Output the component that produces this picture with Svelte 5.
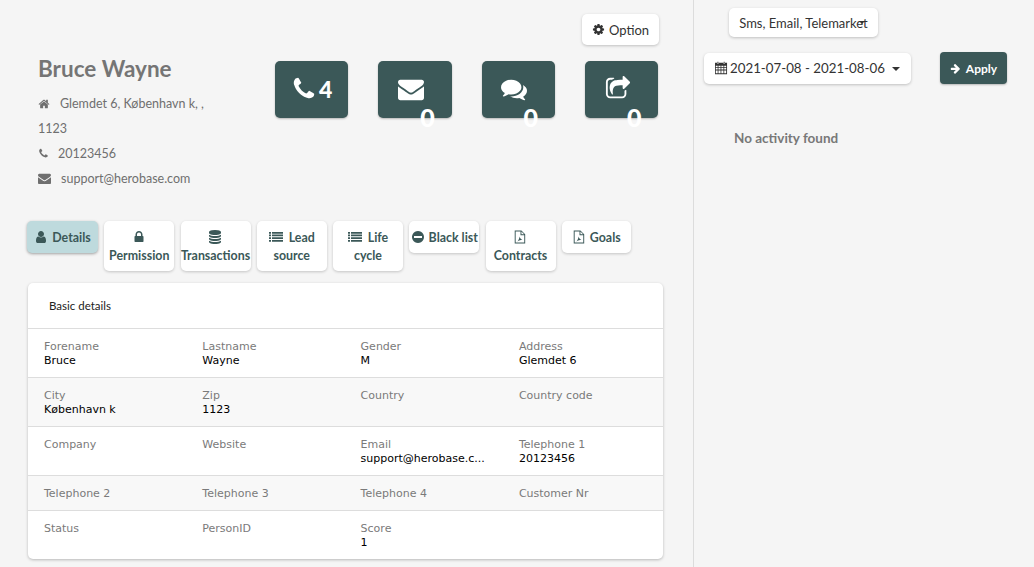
<script>
  const paths = {
    phone: "M1600 1240q0 27-10 70.5t-21 68.5q-21 50-122 106-94 51-186 51-27 0-53-3.5t-57.5-12.5-47-14.5-55.5-20.5-49-18q-98-35-175-83-127-79-264-216t-216-264q-48-77-83-175-3-9-18-49t-20.5-55.5-14.5-47-12.5-57.5-3.5-53q0-92 51-186 56-101 106-122 25-11 68.5-21t70.5-10q14 0 21 3 18 6 53 76 11 19 30 54t35 63.5 31 53.5q3 4 17.5 25t21.5 35.5 7 28.5q0 20-28.5 50t-62 55-62 53-28.5 46q0 9 5 22.5t8.5 20.5 14 24 11.5 19q76 137 174 235t235 174q2 1 19 11.5t24 14 20.5 8.5 22.5 5q18 0 46-28.5t53-62 55-62 50-28.5q14 0 28.5 7t35.5 21.5 25 17.5q25 15 53.5 31t63.5 35 54 30q70 35 76 53 3 7 3 21z",
    envelope: "M1792 710v794q0 66-47 113t-113 47h-1472q-66 0-113-47t-47-113v-794q44 49 101 87 362 246 497 345 57 42 92.5 65.5t94.5 48 110 24.5h2q51 0 110-24.5t94.5-48 92.5-65.5q170-123 498-345 57-39 100-87zm0-294q0 79-49 151t-122 123q-376 261-468 325-10 7-42.5 30.5t-54 38-52 32.5-57.5 27-50 9h-2q-23 0-50-9t-57.5-27-52-32.5-54-38-42.5-30.5q-91-64-262-182.5t-205-142.5q-62-42-117-115.5t-55-136.5q0-78 41.5-130t118.5-52h1472q65 0 112.5 47t47.5 113z",
    comments: "M1408 768q0 139-94 257t-256.5 186.5-353.5 68.5q-86 0-176-16-124 88-278 128-36 9-86 16h-3q-11 0-20.5-8t-11.5-21q-1-3-1-6.5t.5-6.5 2-6l2.5-5 3.5-5.5 4-5 4.5-5 4-4.5q5-6 23-25t26-29.5 22.5-29 25-38.5 20.5-44q-124-72-195-177t-71-224q0-139 94-257t256.5-186.5 353.5-68.5 353.5 68.5 256.5 186.5 94 257zm384 256q0 120-71 224.5t-195 176.5q10 24 20.5 44t25 38.5 22.5 29 26 29.5 23 25q1 1 4 4.5t4.5 5 4 5 3.5 5.5l2.5 5 2 6 .5 6.5-1 6.5q-3 14-13 22t-22 7q-50-7-86-16-154-40-278-128-90 16-176 16-271 0-472-132 58 4 88 4 161 0 309-45t264-129q125-92 192-212t67-254q0-77-23-152 129 71 204 178t75 230z",
    share: "M1472 989v259q0 119-84.500 203.500t-203.500 84.500h-832q-119 0-203.500-84.500t-84.500-203.500v-832q0-119 84.500-203.500t203.500-84.500h255q13 0 22.500 9.500t9.500 22.500q0 27-26 32-77 26-133 60-10 4-16 4h-112q-66 0-113 47t-47 113v832q0 66 47 113t113 47h832q66 0 113-47t47-113v-214q0-19 18-29 28-13 54-37 16-16 35-8 21 9 21 29zM1709 494l-384 384q-18 19-45 19-12 0-25-5-39-17-39-59v-192h-160q-323 0-438 131-119 137-74 473 3 23-20 34-8 2-12 2-16 0-26-13-10-14-21-31t-39.500-68.500-49.500-99.500-38.500-114-17.500-122q0-49 3.500-91t14-90 28-88 47-81.500 68.500-74 94.500-61.500 124.500-48.500 159.500-30.500 196.500-11h160v-192q0-42 39-59 13-5 25-5 26 0 45 19l384 384q19 19 19 45t-19 45z",
    home: "M1472 992v480q0 26-19 45t-45 19h-384v-384h-256v384h-384q-26 0-45-19t-19-45v-480q0-1 .5-3t.5-3l575-474 575 474q1 2 1 6zm223-69l-62 74q-8 9-21 11h-3q-13 0-21-7l-692-577-692 577q-12 8-24 7-13-2-21-11l-62-74q-8-10-7-23.500t11-21.500l719-599q32-26 76-26t76 26l244 204v-195q0-14 9-23t23-9h192q14 0 23 9t9 23v408l219 182q10 8 11 21.500t-7 23.500z",
    gear: "M1152 896q0-106-75-181t-181-75-181 75-75 181 75 181 181 75 181-75 75-181zm512-109v222q0 12-8 23t-20 13l-185 28q-19 54-39 91 35 50 107 138 10 12 10 25t-9 23q-27 37-99 108t-94 71q-12 0-26-9l-138-108q-44 23-91 38-16 136-29 186-7 28-36 28h-222q-14 0-24.500-8.500t-11.500-21.500l-28-184q-49-16-90-37l-141 107q-10 9-25 9-14 0-25-11-126-114-165-168-7-10-7-23 0-12 8-23 15-21 51-66.500t54-70.500q-27-50-41-99l-183-27q-13-2-21-12.500t-8-23.500v-222q0-12 8-23t19-13l186-28q14-46 39-92-40-57-107-138-10-12-10-24 0-10 9-23 26-36 98.500-107.500t94.500-71.500q13 0 26 10l138 107q44-23 91-38 16-136 29-186 7-28 36-28h222q14 0 24.500 8.500t11.500 21.500l28 184q49 16 90 37l142-107q9-9 24-9 13 0 25 10 129 119 165 170 7 8 7 22 0 12-8 23-15 21-51 66.500t-54 70.500q26 50 41 98l183 28q13 2 21 12.500t8 23.500z",
    user: "M1536 1399q0 109-62.500 187t-150.500 78h-854q-88 0-150.500-78t-62.500-187q0-85 8.500-160.500t31.500-152 58.500-131 94-89 134.500-34.500q131 128 313 128t313-128q76 0 134.500 34.500t94 89 58.500 131 31.500 152 8.500 160.500zm-256-887q0 159-112.500 271.500t-271.500 112.500-271.500-112.500-112.500-271.500 112.500-271.500 271.500-112.500 271.500 112.500 112.500 271.500z",
    lock: "M640 768h512v-192q0-106-75-181t-181-75-181 75-75 181v192zm832 96v576q0 40-28 68t-68 28h-960q-40 0-68-28t-28-68v-576q0-40 28-68t68-28h32v-192q0-184 132-316t316-132 316 132 132 316v192h32q40 0 68 28t28 68z",
    database: "M896 768q237 0 443-43t325-127v170q0 69-103 128t-280 93.500-385 34.500-385-34.500-280-93.500-103-128v-170q119 84 325 127t443 43zm0 768q237 0 443-43t325-127v170q0 69-103 128t-280 93.500-385 34.500-385-34.500-280-93.500-103-128v-170q119 84 325 127t443 43zm0-384q237 0 443-43t325-127v170q0 69-103 128t-280 93.500-385 34.500-385-34.500-280-93.500-103-128v-170q119 84 325 127t443 43zm0-1152q208 0 385 34.500t280 93.500 103 128v128q0 69-103 128t-280 93.500-385 34.500-385-34.500-280-93.500-103-128v-128q0-69 103-128t280-93.500 385-34.500z",
    list: "M0 250h256v224h-256zM384 250h1408v224h-1408zM0 590h256v224h-256zM384 590h1408v224h-1408zM0 930h256v224h-256zM384 930h1408v224h-1408zM0 1270h256v224h-256zM384 1270h1408v224h-1408z",
    minus: "M896 128a768 768 0 1 0 .01 0zM384 768v256h1024v-256z",
    pdf: "M220 60h860l480 480v1190h-1340zM340 180v1430h1100v-950h-480v-480zM1080 200v340h340zM560 1480c150-130 260-400 280-640 50 200 150 350 360 400-190 10-430 70-640 240z",
    calendar: "M440 100h120v170h-120zM1240 100h120v170h-120zM130 220h260v110h220v-110h580v110h220v-110h260v1470h-1540zM230 620v180h240v-180zM570 620v180h270v-180zM940 620v180h270v-180zM1310 620v180h250v-180zM230 900v200h240v-200zM570 900v200h270v-200zM940 900v200h270v-200zM1310 900v200h250v-200zM230 1200v380h240v-380zM570 1200v380h270v-380zM940 1200v380h270v-380zM1310 1200v380h250v-380z",
    arrow: "M1600 960q0 54-37 91l-651 651q-39 37-91 37-51 0-90-37l-75-75q-38-38-38-91t38-91l293-293h-704q-52 0-84.500-37.500t-32.500-90.500v-128q0-53 32.500-90.500t84.500-37.500h704l-293-294q-38-36-38-90t38-90l75-75q38-38 90-38 53 0 91 38l651 651q37 35 37 90z"
  };

  const actions = [
    { icon: "phone", count: "4", inline: true },
    { icon: "envelope", count: "0" },
    { icon: "comments", count: "0" },
    { icon: "share", count: "0" }
  ];

  const tabs = [
    { label: "Details", icon: "user", active: true },
    { label: "Permission", icon: "lock" },
    { label: "Transactions", icon: "database" },
    { label: "Lead source", icon: "list" },
    { label: "Life cycle", icon: "list" },
    { label: "Black list", icon: "minus" },
    { label: "Contracts", icon: "pdf" },
    { label: "Goals", icon: "pdf" }
  ];

  const rows = [
    [["Forename", "Bruce"], ["Lastname", "Wayne"], ["Gender", "M"], ["Address", "Glemdet 6"]],
    [["City", "København k"], ["Zip", "1123"], ["Country", ""], ["Country code", ""]],
    [["Company", ""], ["Website", ""], ["Email", "support@herobase.c..."], ["Telephone 1", "20123456"]],
    [["Telephone 2", ""], ["Telephone 3", ""], ["Telephone 4", ""], ["Customer Nr", ""]],
    [["Status", ""], ["PersonID", ""], ["Score", "1"], ["", ""]]
  ];
</script>

{#snippet icon(name, cls)}
  <svg class={cls} viewBox="0 0 1792 1792" aria-hidden="true"><path fill="currentColor" fill-rule="evenodd" d={paths[name]} /></svg>
{/snippet}

<div class="page">
  <main class="left">
    <div class="top">
      <div class="option-row">
        <button class="btn option">{@render icon("gear", "i12")}<span>Option</span></button>
      </div>
      <div class="profile">
        <div class="person">
          <h1>Bruce Wayne</h1>
          <p>{@render icon("home", "i-home")}<span>Glemdet 6, København k, ,</span></p>
          <p>1123</p>
          <p>{@render icon("phone", "i-phone")}<span>20123456</span></p>
          <p>{@render icon("envelope", "i-env")}<span>support@herobase.com</span></p>
        </div>
        <div class="actions">
          {#each actions as a}
            <button class="action" class:plain={!a.inline}>
              {@render icon(a.icon, "i-action")}
              {#if a.inline}<b class="count-inline">{a.count}</b>{:else}<b class="count">{a.count}</b>{/if}
            </button>
          {/each}
        </div>
      </div>
    </div>

    <nav class="tabs">
      {#each tabs as t}
        <button class="tab" class:active={t.active} class:goals={t.label === "Goals"}>{@render icon(t.icon, t.icon === "list" ? "i-tab i-list" : "i-tab")} {t.label}</button>
      {/each}
    </nav>

    <section class="card">
      <header>Basic details</header>
      {#each rows as row, r}
        <div class="row" class:odd={r % 2 === 1}>
          {#each row as [label, value]}
            <div class="cell">
              <div class="label">{label}</div>
              {#if value}<div class="value">{value}</div>{/if}
            </div>
          {/each}
        </div>
      {/each}
    </section>
  </main>

  <aside class="right">
    <div class="filter-row"><button class="btn channels">Sms, Email, Telemarket<i class="mini-caret"></i></button></div>
    <div class="date-row">
      <button class="btn date">{@render icon("calendar", "i-cal")}<span>2021-07-08 - 2021-08-06</span><i class="caret"></i></button>
      <button class="apply">{@render icon("arrow", "i-arrow")}<span>Apply</span></button>
    </div>
    <p class="empty">No activity found</p>
  </aside>
</div>

<style>
  :global(body) { margin: 0; background: #f5f5f5; }
  .page {
    display: flex;
    width: 1034px;
    height: 567px;
    overflow: hidden;
    font-family: Lato, "Open Sans", sans-serif;
    color: #333;
  }
  button { font-family: inherit; border: 0; cursor: pointer; }
  svg { display: inline-block; flex: none; }

  .left { width: 693px; box-sizing: border-box; padding: 14px 30px 0 27px; flex: none; }
  .right { flex: 1; border-left: 1px solid #dcdcdc; }

  .option-row { display: flex; justify-content: flex-end; padding-right: 4px; height: 47px; }
  .btn {
    position: relative;
    background: #fff;
    border-radius: 5px;
    box-shadow: 0 1px 3px rgba(0, 0, 0, 0.22);
    color: #333;
    font-size: 13px;
    display: flex;
    align-items: center;
    padding: 0;
  }
  .option { width: 77px; height: 31px; justify-content: center; gap: 4px; }
  .i12 { width: 13px; height: 13px; }

  .profile { display: flex; }
  .person { width: 248px; padding-left: 11px; box-sizing: border-box; color: #6f6f6f; }
  h1 { margin: 0 0 16px; font-size: 22.5px; line-height: 15px; font-weight: 700; color: #757575; height: 14px; }
  .person p { margin: 0; font-size: 12.5px; line-height: 25px; display: flex; align-items: center; }
  .person p span { white-space: nowrap; }
  .i-home { width: 12px; height: 12px; margin-right: 10px; }
  .i-phone { width: 11px; height: 11px; margin-right: 9px; }
  .i-env { width: 13px; height: 13px; margin-right: 10px; }

  .actions { display: flex; gap: 30px; }
  .action {
    position: relative;
    width: 73.3px;
    height: 57px;
    background: #3b5858;
    color: #fff;
    border-radius: 5px;
    box-shadow: 0 1px 2px rgba(0, 0, 0, 0.25);
    padding: 0;
    display: flex;
    align-items: center;
    justify-content: center;
    gap: 2px;
  }
  .i-action { width: 26px; height: 26px; margin-top: -1px; }
  .plain .i-action { margin-right: 8px; }
  .count-inline { font-size: 23px; line-height: 1; font-weight: 900; margin-top: -1px; }
  .count { position: absolute; left: 42px; top: 44px; font-size: 25px; line-height: 24px; font-weight: 900; }

  .tabs { display: flex; align-items: flex-start; gap: 6.25px; margin-top: 30px; }
  .tab {
    width: 70px;
    box-sizing: border-box;
    background: #fff;
    color: #3b5858;
    border-radius: 5px;
    box-shadow: 0 1px 3px rgba(0, 0, 0, 0.2);
    font-size: 12.4px;
    font-weight: 700;
    line-height: 18px;
    padding: 8px 0 6px;
    text-align: center;
    white-space: normal;
    overflow: visible;
    flex: none;
  }
  .tab.active { background: #bedadd; width: 71px; box-shadow: 0 1px 3px rgba(0, 0, 0, 0.35); }
  .tab.goals { width: 69px; }
  .i-tab { width: 14px; height: 14px; vertical-align: -2px; margin-right: 1px; }
  .i-list { margin-right: 3px; }

  .card {
    margin: 12px 0 0 1px;
    width: 635px;
    background: #fff;
    border-radius: 5px;
    box-shadow: 0 1px 3px rgba(0, 0, 0, 0.25);
    overflow: hidden;
  }
  header {
    height: 45px;
    line-height: 45px;
    padding-left: 21px;
    font-size: 11.5px;
    color: #222;
    border-bottom: 1px solid #ddd;
  }
  .row {
    display: grid;
    grid-template-columns: repeat(4, 158.3px);
    padding: 11px 0 9px 16px;
    font-family: "DejaVu Sans", Verdana, sans-serif;
    font-size: 11px;
    line-height: 14px;
    border-bottom: 1px solid #ddd;
  }
  .row:last-child { border-bottom: 0; }
  .row.odd { background: #f8f8f8; }
  .label { color: #7a7a7a; height: 14px; }
  .value { color: #000; }

  .filter-row { padding: 8px 0 0 35px; }
  .channels { width: 149px; height: 29px; justify-content: center; font-size: 13px; }
  .mini-caret {
    position: absolute;
    left: 130px;
    top: 13px;
    border-left: 3px solid transparent;
    border-right: 3px solid transparent;
    border-top: 3px solid #333;
  }
  .date-row { display: flex; align-items: center; margin-top: 15px; padding-left: 10px; }
  .date { width: 207px; height: 31px; padding-left: 10px; box-sizing: border-box; font-size: 13.3px; }
  .i-cal { width: 14px; height: 14px; margin-right: 2px; }
  .caret {
    margin-left: 7px;
    width: 0; height: 0;
    border-left: 4px solid transparent;
    border-right: 4px solid transparent;
    border-top: 4px solid #333;
    margin-top: 2px;
  }
  .apply {
    margin-left: 29px;
    width: 67px;
    height: 32px;
    background: #3b5858;
    color: #fff;
    border-radius: 4px;
    box-shadow: 0 1px 2px rgba(0, 0, 0, 0.25);
    display: flex;
    align-items: center;
    justify-content: center;
    gap: 5px;
    font-size: 12px;
    font-weight: 700;
    padding: 0;
  }
  .i-arrow { width: 11px; height: 11px; }
  .empty { margin: 45px 0 0 40px; font-size: 13.5px; font-weight: 700; color: #787878; line-height: 18px; }
</style>
